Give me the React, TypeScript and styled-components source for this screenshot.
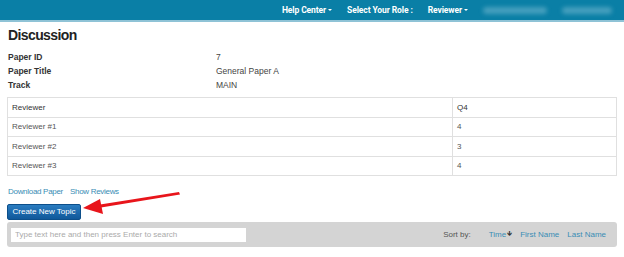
import React from "react";
import styled, { createGlobalStyle } from "styled-components";

const GlobalStyle = createGlobalStyle`
  body {
    margin: 0;
    background: #fff;
    font-family: "Liberation Sans", Arial, sans-serif;
    color: #333;
  }
`;

const reviewers = [
  { name: "Reviewer #1", q4: "4" },
  { name: "Reviewer #2", q4: "3" },
  { name: "Reviewer #3", q4: "4" },
];

const App = () => {
  return (
    <>
      <GlobalStyle />
      {/* ------------------ top navigation ------------------ */}
      <TopBar>
        <NavItem>
          Help Center<Caret />
        </NavItem>
        <NavItem>Select Your Role :</NavItem>
        <NavItem>
          Reviewer <Caret />
        </NavItem>
        <Blurred width={64} />
        <Blurred width={50} />
      </TopBar>

      <Page>
        <Title>Discussion</Title>
        <InfoGrid>
          <dt>Paper ID</dt>
          <dd>7</dd>
          <dt>Paper Title</dt>
          <dd>General Paper A</dd>
          <dt>Track</dt>
          <dd>MAIN</dd>
        </InfoGrid>

        <ScoreTable>
          <thead>
            <tr>
              <th>Reviewer</th>
              <th>Q4</th>
            </tr>
          </thead>
          <tbody>
            {reviewers.map((r) => (
              <tr key={r.name}>
                <td>{r.name}</td>
                <td>{r.q4}</td>
              </tr>
            ))}
          </tbody>
        </ScoreTable>

        <Links>
          <a>Download Paper</a>
          <a>Show Reviews</a>
        </Links>

        <ButtonRow>
          <CreateButton>Create New Topic</CreateButton>
          <Arrow width="100" height="24" viewBox="0 0 100 24">
            <path d="M14 15 L96 2 L97 4.5 L15 18 Z" fill="#e8151b" />
            <path d="M0 18 L17 9 L20 24 Z" fill="#e8151b" />
          </Arrow>
        </ButtonRow>

        <SearchPanel>
          <SearchInput placeholder="Type text here and then press Enter to search" />
          <SortBox>
            <SortLabel>Sort by:</SortLabel>
            <SortLink>
              Time<DownArrow>&#x1F87B;</DownArrow>
            </SortLink>
            <SortLink>First Name</SortLink>
            <SortLink>Last Name</SortLink>
          </SortBox>
        </SearchPanel>
      </Page>
    </>
  );
};

export default App;

const TopBar = styled.div`
  height: 20px;
  background: #0a7fa6;
  border-bottom: 2px solid #8fc3d6;
  display: flex;
  align-items: center;
  justify-content: flex-end;
  padding-right: 12px;
  gap: 15px;
`;

const NavItem = styled.span`
  color: #fff;
  font-family: Roboto, "Liberation Sans", sans-serif;
  font-weight: bold;
  font-size: 8.5px;
  letter-spacing: -0.1px;
  display: flex;
  align-items: center;
`;

const Caret = styled.span`
  display: inline-block;
  margin-left: 2px;
  width: 0;
  height: 0;
  border-left: 2px solid transparent;
  border-right: 2px solid transparent;
  border-top: 2px solid #fff;
`;

const Blurred = styled.span<{ width: number }>`
  width: ${(p) => p.width}px;
  height: 7px;
  border-radius: 4px;
  background: rgba(180, 220, 235, 0.35);
  filter: blur(2px);
`;

const Page = styled.div`
  padding: 0 7px;
`;

const Title = styled.h1`
  margin: 4px 0 0 1px;
  font-size: 14px;
  letter-spacing: -0.6px;
  font-weight: bold;
  color: #222;
  line-height: 18px;
`;

const InfoGrid = styled.dl`
  margin: 6px 0 0 1px;
  display: grid;
  grid-template-columns: 208px 1fr;
  font-size: 8.5px;
  line-height: 14px;

  dt {
    font-weight: bold;
    color: #333;
  }
  dd {
    margin: 0;
    color: #444;
  }
`;

const ScoreTable = styled.table`
  margin-top: 5px;
  width: 100%;
  border-collapse: collapse;
  font-size: 8px;

  th,
  td {
    border: 1px solid #e0e0e0;
    text-align: left;
    height: 18.5px;
    padding: 0 4px;
    font-weight: normal;
    color: #555;
  }
  th {
    color: #333;
  }
  th:first-child,
  td:first-child {
    width: 436px;
  }
`;

const Links = styled.div`
  margin-top: 10px;
  display: flex;
  gap: 7px;
  padding-left: 1px;
  font-size: 8px;
  letter-spacing: -0.3px;
  line-height: 12px;

  a {
    color: #3a8db5;
    cursor: pointer;
  }
`;

const ButtonRow = styled.div`
  position: relative;
  margin-top: 2px;
  height: 16px;
`;

const CreateButton = styled.button`
  height: 16px;
  width: 74px;
  padding: 0;
  border: 1px solid #0d4f8a;
  border-radius: 2px;
  background: linear-gradient(#2a7cc0, #10589a);
  color: #fff;
  font-family: "Liberation Sans", Arial, sans-serif;
  font-size: 8px;
`;

const Arrow = styled.svg`
  position: absolute;
  left: 76px;
  top: -10px;
`;

const SearchPanel = styled.div`
  margin-top: 6px;
  height: 25px;
  background: #d4d4d4;
  border-radius: 3px;
  display: flex;
  align-items: center;
  justify-content: space-between;
  padding: 0 11px 0 4px;
`;

const SearchInput = styled.input`
  width: 235px;
  height: 14px;
  box-sizing: border-box;
  border: none;
  background: #fff;
  padding: 0 4px;
  font-family: "Liberation Sans", Arial, sans-serif;
  font-size: 8px;
  &::placeholder {
    color: #aaa;
  }
`;

const SortBox = styled.div`
  display: flex;
  align-items: center;
  font-size: 8px;
`;

const SortLabel = styled.span`
  color: #555;
  margin-right: 10px;
`;

const SortLink = styled.span`
  color: #3a8db5;
  margin-left: 8px;
  display: flex;
  align-items: center;
`;

const DownArrow = styled.span`
  color: #333;
  font-family: "DejaVu Sans", sans-serif;
  font-size: 7px;
  margin-left: 1px;
`;
